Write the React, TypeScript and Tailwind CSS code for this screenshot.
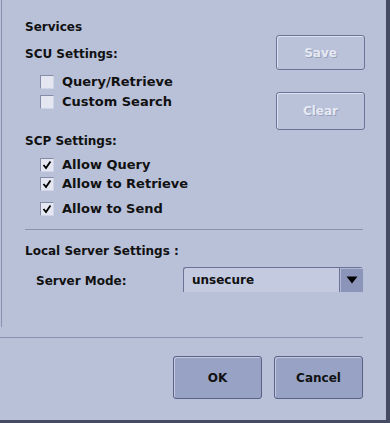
import React from "react";

const font = { fontFamily: '"DejaVu Sans", "Liberation Sans", sans-serif' };

function Check({ checked, label }: { checked: boolean; label: string }) {
  return (
    <div className="flex items-center h-[16px] ml-[38px]">
      <div className="w-[14px] h-[14px] bg-[#e4e7f2] border-t border-l border-[#858ca8] border-r border-b border-r-[#cfd4e6] border-b-[#cfd4e6] flex items-center justify-center">
        {checked && (
          <svg width="10" height="10" viewBox="0 0 10 10">
            <path d="M1.5 5 L4 8 L8.5 1.5" fill="none" stroke="#000" strokeWidth="1.8" />
          </svg>
        )}
      </div>
      <span className="ml-[8px] text-[13px] leading-[16px] font-bold text-[#111]">{label}</span>
    </div>
  );
}

function DisabledButton({ label, h }: { label: string; h: string }) {
  return (
    <div
      className={`w-[89px] ${h} rounded-[3px] border border-[#6c7396] bg-[#bac2da] shadow-[inset_1px_1px_0_#dde2f0] flex items-center justify-center text-[12px] font-bold text-[#e6e9f3] [text-shadow:1px_1px_0_#98a0ba]`}
    >
      {label}
    </div>
  );
}

function MainButton({ label }: { label: string }) {
  return (
    <div className="w-[89px] h-[43px] rounded-[3px] border border-[#5a6185] bg-[#98a2c5] shadow-[inset_1px_1px_0_#c3cae1] flex items-center justify-center text-[12px] font-bold text-[#111]">
      {label}
    </div>
  );
}

export default function App() {
  return (
    <div
      style={font}
      className="w-[390px] h-[423px] bg-[#b9c1d9] border-r-[4px] border-b-[3px] border-[#454b63] flex flex-col"
    >
      <div className="ml-px h-[327px] border-l border-[#8a92b2] flex flex-col pt-[19px]">
        <div className="ml-[23px] text-[12px] leading-[16px] font-bold text-[#111]">Services</div>
        <div className="flex justify-between pr-[21px]">
          <div className="flex flex-col">
            <div className="ml-[23px] mt-[11px] text-[12px] leading-[16px] font-bold text-[#111]">SCU Settings:</div>
            <div className="mt-[12px]">
              <Check checked={false} label="Query/Retrieve" />
            </div>
            <div className="mt-[4px]">
              <Check checked={false} label="Custom Search" />
            </div>
          </div>
          <div className="flex flex-col">
            <DisabledButton label="Save" h="h-[35px]" />
            <div className="mt-[22px]">
              <DisabledButton label="Clear" h="h-[38px]" />
            </div>
          </div>
        </div>
        <div className="ml-[23px] mt-[3px] text-[12px] leading-[16px] font-bold text-[#111]">SCP Settings:</div>
        <div className="mt-[8px]">
          <Check checked={true} label="Allow Query" />
        </div>
        <div className="mt-[3px]">
          <Check checked={true} label="Allow to Retrieve" />
        </div>
        <div className="mt-[9px]">
          <Check checked={true} label="Allow to Send" />
        </div>
        <div className="ml-[23px] mt-[12px] w-[338px] h-px bg-[#8a92b2]" />
        <div className="ml-[23px] mt-[13px] text-[12px] leading-[16px] font-bold text-[#111]">Local Server Settings :</div>
        <div className="mt-[8px] flex items-center h-[25px]">
          <div className="ml-[34px] w-[147px] text-[12px] leading-[16px] font-bold text-[#111] pt-[2px]">Server Mode:</div>
          <div className="w-[180px] h-[25px] flex rounded-t-[3px] border-t border-l border-[#6c7396] bg-[#c4cbe1]">
            <div className="flex-1 flex items-center pl-[8px] text-[12px] font-bold text-[#111]">unsecure</div>
            <div className="w-[24px] h-full bg-[#8b95ba] border-l border-[#6c7396] shadow-[inset_1px_1px_0_#b0b8d4] flex items-center justify-center">
              <svg width="12" height="8" viewBox="0 0 12 8">
                <path d="M0.5 0.5 L11.5 0.5 L6 7.5 Z" fill="#000" />
              </svg>
            </div>
          </div>
        </div>
      </div>
      <div className="mt-[10px] w-[363px] h-px bg-[#8a92b2]" />
      <div className="mt-[18px] flex gap-[12px] ml-[173px]">
        <MainButton label="OK" />
        <MainButton label="Cancel" />
      </div>
    </div>
  );
}
